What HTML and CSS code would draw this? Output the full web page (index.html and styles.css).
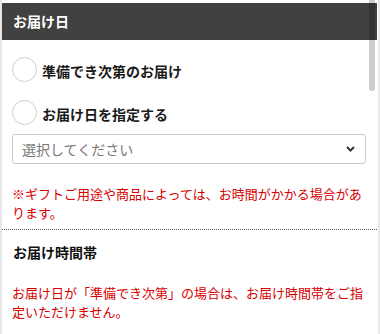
FILE: index.html
```html
<!DOCTYPE html>
<html lang="ja">
<head>
<meta charset="utf-8">
<title>お届け日</title>
<link rel="stylesheet" href="styles.css">
</head>
<body>
<div class="page">
  <div class="panel">
    <div class="header">お届け日</div>
    <div class="options">
      <label class="radio-row"><span class="radio"></span><span class="radio-label">準備でき次第のお届け</span></label>
      <label class="radio-row"><span class="radio"></span><span class="radio-label">お届け日を指定する</span></label>
    </div>
    <div class="select">
      <span class="placeholder">選択してください</span>
      <svg class="chevron" width="9" height="6" viewBox="0 0 9 6"><path d="M1 1 L4.5 4.5 L8 1" fill="none" stroke="#333" stroke-width="2"/></svg>
    </div>
    <p class="note">※ギフトご用途や商品によっては、お時間がかかる場合があります。</p>
    <div class="divider"></div>
    <div class="subhead">お届け時間帯</div>
    <p class="note note-lower">お届け日が「準備でき次第」の場合は、お届け時間帯をご指定いただけません。</p>
    <div class="thumb"></div>
  </div>
</div>
</body>
</html>
```
FILE: styles.css
```css
html, body {
  margin: 0;
  padding: 0;
  background: #fff;
}
body {
  font-family: "Noto Sans CJK JP", "Noto Sans", sans-serif;
  color: #222;
  overflow: hidden;
}
.page {
  width: 380px;
  height: 334px;
  box-sizing: border-box;
  border-left: 2px solid #e6e6e6;
  border-right: 2px solid #e9e9e9;
  padding-right: 1px;
  display: flex;
}
.panel {
  position: relative;
  flex: 1;
  padding-top: 3px;
  overflow: hidden;
}
.header {
  height: 37px;
  background: #414141;
  color: #fff;
  font-weight: 700;
  font-size: 14px;
  line-height: 37px;
  padding-left: 11px;
}
.options {
  display: flex;
  flex-direction: column;
  gap: 18px;
  padding: 17px 10px 0;
}
.radio-row {
  display: flex;
  align-items: center;
  gap: 5px;
  height: 25px;
}
.radio {
  width: 25px;
  height: 25px;
  box-sizing: border-box;
  border: 1px solid #cfcfcf;
  border-radius: 50%;
  background: #fff;
}
.radio-label {
  font-size: 14px;
  font-weight: 700;
  line-height: 20px;
  margin-top: 2px;
  color: #1a1a1a;
}
.select {
  margin: 9px 11px 0 10px;
  height: 30px;
  box-sizing: border-box;
  border: 1px solid #c9c9c9;
  border-radius: 3px;
  display: flex;
  align-items: center;
  justify-content: space-between;
  padding: 0 10px 0 9px;
}
.placeholder {
  font-size: 14px;
  color: #777;
  line-height: 20px;
}
.chevron {
  display: block;
}
.note {
  margin: 20px 10px 0;
  font-size: 13px;
  line-height: 19px;
  color: #d80000;
}
.divider {
  margin-top: 7px;
  border-top: 1px dotted #555;
}
.subhead {
  margin: 12px 0 0 11px;
  font-size: 14px;
  font-weight: 700;
  line-height: 20px;
  color: #111;
}
.note-lower {
  margin-top: 21px;
}
.thumb {
  position: absolute;
  top: 0;
  left: 367px;
  width: 6px;
  height: 91px;
  border-radius: 0 0 3px 3px;
  background: rgba(0, 0, 0, 0.2);
}
```
